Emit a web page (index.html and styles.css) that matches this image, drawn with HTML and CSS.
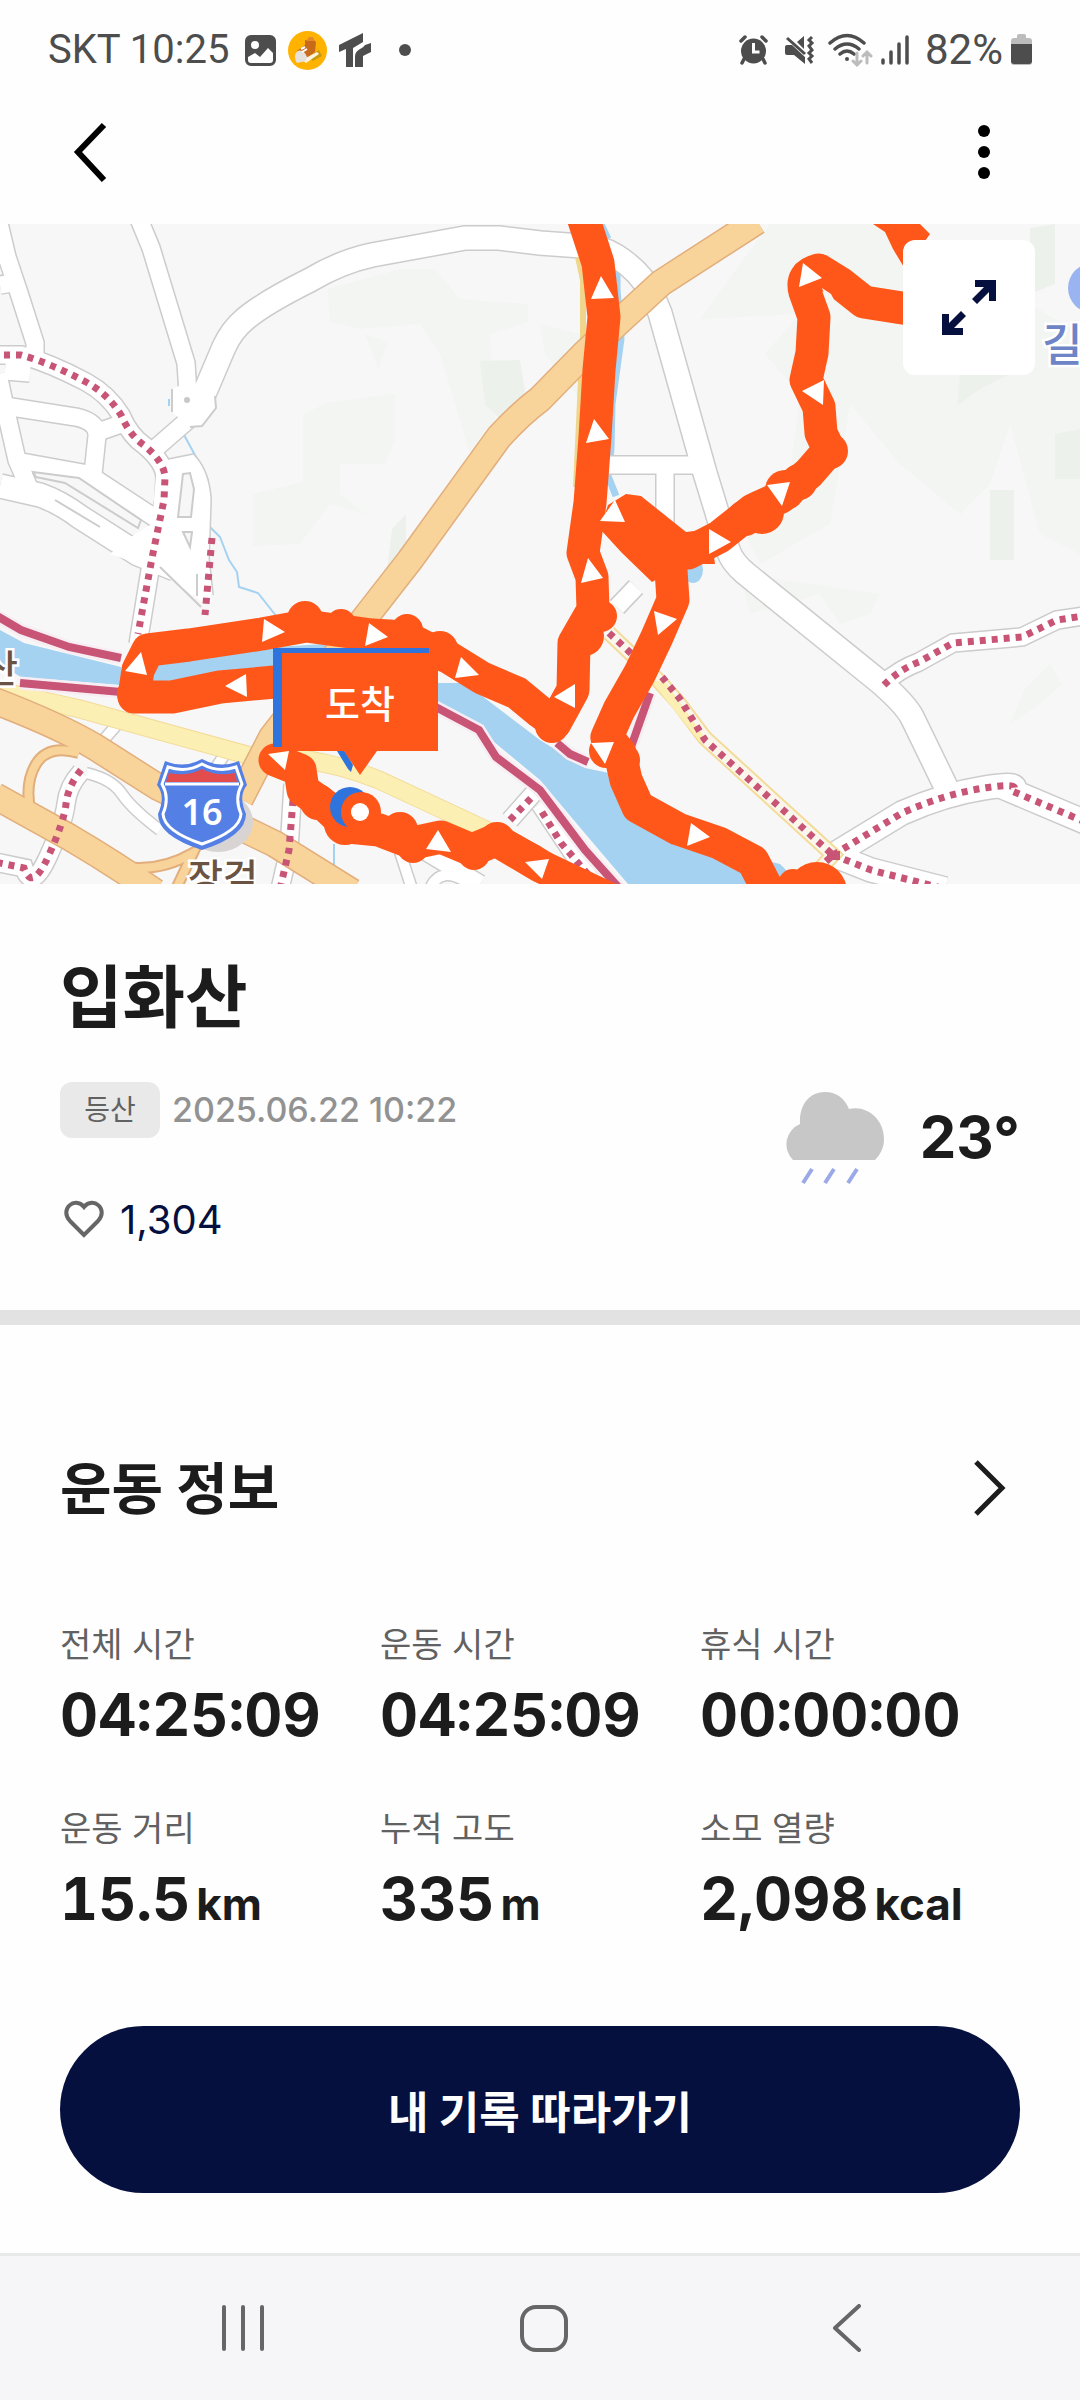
FILE: index.html
```html
<!DOCTYPE html>
<html lang="ko">
<head>
<meta charset="utf-8">
<meta name="viewport" content="width=device-width, initial-scale=1">
<title>입화산</title>
<link rel="stylesheet" href="styles.css">
</head>
<body>
<div class="screen">
  <div class="status">
    <div class="status-left">
      <span class="status-text">SKT 10:25</span>
      <svg width="31" height="31" viewBox="0 0 31 31"><path fill="#4d4d4d" fill-rule="evenodd" d="M6 0h19a6 6 0 0 1 6 6v19a6 6 0 0 1-6 6H6a6 6 0 0 1-6-6V6a6 6 0 0 1 6-6zM3 22v3a3 3 0 0 0 3 3h19a3 3 0 0 0 3-3v-7l-5-5-8 9-5-4zM10 6a4 4 0 1 0 0 8 4 4 0 0 0 0-8z"/></svg>
      <svg width="39" height="39" viewBox="0 0 39 39"><circle cx="19.500" cy="19.500" r="19.500" fill="#ffb300"/><path d="M20 26l11-7 3 6-9 5z" fill="#c79a10"/><path d="M17 9l8 0 3 2-1 10-12 9-6-10 8-6z" fill="#c96a1b"/><path d="M18 10l3-4 4 0 2 4z" fill="#e58a2a"/><path d="M14 29l15-8 2 2-13 9z" fill="#fff3e0"/><path d="M8 22c3-5 9-2 11 4l-1 4-9 2c-2-3-3-7-1-10z" fill="#e6e1dc"/><path d="M13 18l4-2M14 21l5-3" stroke="#fff" stroke-width="2"/></svg>
      <svg width="32" height="35" viewBox="0 0 32 35" fill="#4d4d4d"><path d="M0 12L24 0v9l-10 6v19H7V16l-7 3z"/><path d="M32 10v9l-8 4v11h-8V24c0-8 8-8 10-12z"/></svg>
      <svg class="more-dot" width="12" height="12" viewBox="0 0 12 12"><circle cx="6" cy="6" r="6" fill="#4d4d4d"/></svg>
    </div>
    <div class="status-right">
      <svg width="37" height="30" viewBox="0 0 37 30"><circle cx="14.500" cy="16" r="12.500" fill="#4d4d4d"/><path d="M2 6l4-4M27 6l-4-4M5 24l-2 4M24 24l2 4" stroke="#4d4d4d" stroke-width="3.500" stroke-linecap="round"/><path d="M14.500 8v9h6" fill="none" stroke="#fff" stroke-width="3"/></svg>
      <svg width="36" height="30" viewBox="0 0 36 30"><path fill="#4d4d4d" d="M3 10h5l13 12v7L10 20H3q-2 0-2-2v-6q0-2 2-2zM13 7l7-6v13z"/><path d="M3 3l18 16" stroke="#4d4d4d" stroke-width="3"/><path d="M28 2l-3 3 3 3-3 3 3 4-3 3 3 3-3 3 3 4" fill="none" stroke="#4d4d4d" stroke-width="3"/></svg>
      <svg width="45" height="34" viewBox="0 0 45 34" fill="none" stroke="#4d4d4d" stroke-width="3.500" stroke-linecap="round"><path d="M2 10Q19-5 36 10M7 16q12-10 24 0M12 21q7-6 14 0"/><circle cx="19" cy="26" r="2" fill="#4d4d4d" stroke="none"/><g stroke="#bcbcbc" stroke-width="3"><path d="M29 20v12m-4-4l4 4 4-4M39 30V19m-4 4l4-4 4 4"/></g></svg>
      <svg width="36" height="30" viewBox="0 0 36 30" stroke="#4d4d4d" stroke-width="3.500" stroke-linecap="round"><path d="M2 25v3M10 17v11M18 9v19M26 2v26"/></svg>
      <span class="status-text battery-level">82%</span>
      <svg width="21" height="32" viewBox="0 0 21 32"><path fill="#bcbcbc" d="M6 4V2q0-2 2-2h5q2 0 2 2v2h3q3 0 3 3v21q0 3-3 3H3q-3 0-3-3V7q0-3 3-3z"/><path fill="#4d4d4d" d="M0 10h21v17q0 3-3 3H3q-3 0-3-3z"/></svg>
    </div>
  </div>

  <header class="appbar">
    <button class="icon-button" aria-label="뒤로"><svg width="60" height="60" viewBox="0 0 60 60"><path d="M44 3L18 30l26 28" fill="none" stroke="#000" stroke-width="6"/></svg></button>
    <button class="icon-button" aria-label="더보기"><svg width="60" height="60" viewBox="0 0 60 60"><circle cx="30" cy="9" r="6"/><circle cx="30" cy="30" r="6"/><circle cx="30" cy="51" r="6"/></svg></button>
  </header>

  <div class="map">
    <svg class="map-drawing" viewBox="0 0 1080 660" role="img" aria-label="이동 경로 지도">
      <defs>
        <g id="roads-wide">
          <path d="M186 184L198 183 207 163 224 123Q232 106 244 96 262 80 310 56 340 38 372 31L465 14 499 14 540 19 581 22Q600 22 616 32 640 47 652 70L660 89 705 249 716 285 728 326Q732 338 745 349L881 459Q905 480 912 493L946 563"/>
          <path d="M833 631L902 589Q945 570 984 564T1012 567L1090 600M833 631L871 646 945 665"/>
          <path d="M0 262L40 271Q60 278 80 293L138 330 175 345"/>
        </g>
        <g id="roads-mid">
          <path d="M-2-5L7 33 19 69 35 119V135M0 61L18 58M139-5L151 24 186 139 188 170M188 196L157 223"/>
          <path d="M-5 131H21Q50 139 86 158 108 170 121 191 130 212 145 222 164 238 165 253L164 276 152 334 138 420M5 147L30 149"/>
          <path d="M-2 150L5 183 17 236 30 266M5 182L76 193Q98 198 97 212L93 250M98 208L121 200M22 238L88 250 155 294M165 245L190 240Q200 252 202 275L200 335 204 372"/>
          <path d="M609 241H698M665 246V300M617 383L636 363"/>
          <path d="M884 459Q900 445 919 438L953 419 1022 413 1057 396 1090 391"/>
          <path d="M293 560L289 626 280 665M81 548Q68 562 66 580T48 633 24 644L-5 638"/>
          <path d="M510 596L540 562M540 580L590 655M340 595L410 618 480 660"/>
        </g>
        <g id="roads-thin">
          <path d="M86 549Q112 555 122 570T160 606M100 520L122 495M215 545L225 530M400 628L412 665M430 665Q440 640 470 660"/>
        </g>
        <g id="highways">
          <path d="M757-3L661 59 585 129 540 175Q520 190 499 213L410 336 272 513 240 575"/>
          <path d="M-5 477Q60 502 95 523L158 563 275 620 352 668M-5 572L69 613Q115 640 155 668"/>
        </g>
        <g id="ramps"><path d="M79 529Q48 520 36 540T31 590M125 643Q160 648 193 629L176 665"/></g>
        <g id="yellow-road"><path d="M0 467L80 485 258 534M290 533Q340 540 379 556L495 610"/></g>
        <g id="farm-road"><path d="M609 409L630 429 657 455 678 478 705 514 833 631 815 650"/></g>
      </defs>

      <rect width="1080" height="660" fill="#f7f7f7"/>
      <g fill="#f2f5f1">
        <path d="M770 0H890L930 20 1080 110V330L1040 310 1010 200 990 260 960 290 900 240 850 180 830 300 760 340 740 300 790 250 800 170 765 130 800 90 700 95 740 40z"/>
        <path d="M328 65L400 45 435 45 460 75 528 80V98L490 110 495 200 470 230 455 180 440 130 420 100 360 105 330 98zM303 190L330 178 395 170V215L385 240 340 240 340 270 365 290 330 280 300 320 253 322V270L303 258zM365 110L388 118 378 145zM740 350L880 370 870 390 840 400 820 370 750 390zM1025 465L1050 440 1062 460 1040 480 1010 500z"/>
        <path d="M540 100L580 110V175L545 130z"/>
      </g>
      <g fill="#edf1ec"><path d="M480 137L520 136 527 180 500 195 485 180zM387 345L392 305 406 290V325zM1030 4L1055 0V60L1030 70zM960 150L1030 140 980 165 957 182zM990 266h24v70h-24zM1055 210L1080 205V255L1055 255z"/></g>

      <g class="water">
        <path d="M0 406L24 419 121 443V461L21 453 0 441zM150 441L275 423 340 419V440L275 443 186 459H150zM430 459H465L540 516 585 544 609 549 650 580 700 620 780 640 800 660H628L588 613 540 556 482 508 430 476z"/>
        <ellipse cx="693" cy="346" rx="10" ry="13"/>
      </g>
      <path class="stream" d="M183 209L196 233 208 256V301L220 313 229 336 237 348 239 363 258 369 277 393M334 620V650M169 175V182"/>
      <path class="canal" d="M600-2L608 15M617 45V65L621 115 612 180 611 225 608 252 616 272"/>

      <g class="road-case"><use href="#roads-wide" stroke-width="26"/><use href="#roads-mid" stroke-width="20"/><use href="#roads-thin" stroke-width="13"/></g>
      <path d="M157 240L200 240 206 258 205 330 212 377 204 380 162 348 110 330 135 310 152 300z" fill="#fff"/>
      <g class="road-fill"><use href="#roads-wide" stroke-width="23"/><use href="#roads-mid" stroke-width="17"/><use href="#roads-thin" stroke-width="10"/></g>
      <path d="M172 165L188 158 215 172 216 184 202 202 190 203 172 188z" fill="#fff"/>
      <path d="M190 203L202 202 216 184 215 172M172 165V188" fill="none" stroke="#ccc" stroke-width="2"/>
      <circle cx="187" cy="176" r="3" fill="#c8c8c8"/>
      <g class="island">
        <path d="M33 248L79 254 141 296 138 304 65 259 36 253zM183 250L190 249 194 265 191 293H178zM183 308H192L190 323z"/>
        <path d="M55 276L100 303M160 343L201 383M197 350V372"/>
      </g>

      <path d="M578 33L583 56V113L576 263" fill="none" stroke="#f0d68c" stroke-width="6"/>
      <g class="yellow-case"><use href="#yellow-road" stroke-width="19"/><use href="#farm-road" stroke-width="16"/></g>
      <g class="yellow-fill"><use href="#yellow-road" stroke-width="17"/></g>
      <g class="farm-fill"><use href="#farm-road" stroke-width="12"/></g>
      <path d="M652 458L664 456 705 514 700 518z" fill="#fcefb4"/>

      <g class="highway-case"><use href="#highways" stroke-width="28"/><use href="#ramps" stroke-width="12"/></g>
      <g class="highway-fill"><use href="#highways" stroke-width="25"/><use href="#ramps" stroke-width="8"/></g>

      <path class="bike-case" d="M-3 392L21 406 69 423 121 434M20 459L121 468M430 480L479 506 496 533 540 566 585 626 620 665M557 519L570 530 588 538M650 469L631 523"/>
      <path class="bike" d="M-3 392L21 406 69 423 121 434M20 459L121 468M430 480L479 506 496 533 540 566 585 626 620 665M557 519L570 530 588 538M650 469L631 523"/>
      <g class="dots">
        <path d="M4 131H21Q50 139 86 158 108 170 121 191 130 212 145 222 164 238 165 253L164 276 152 334 138 410"/>
        <path d="M212 314L205 391M293 576L289 626 280 665M81 546Q68 562 66 580T48 633 24 644L-5 638"/>
        <path d="M884 461Q900 445 919 438L953 419 1022 413 1057 396 1090 391M833 631L902 589Q945 570 984 564T1012 567L1090 600M833 631L871 646 945 665"/>
        <path d="M609 409L635 433M662 453L680 475 705 516 833 631 820 643M542 588L561 619 592 655M510 596L535 570"/>
      </g>
      <path d="M827 627h13v9h-13z" fill="#c85476"/>

      <g class="track">
        <path d="M582-10L598 39 604 93 599 146 595 213 590 279 583 329 592 353 593 386 574 419 573 466 555 499 540 488 517 469 482 454 448 433 425 423 406 413 372 411 306 402 262 410 189 421 148 426 138 446 134 473 172 473 220 463 275 458"/>
        <path d="M275 536L300 546 303 566 327 583 348 603 379 606 413 619 441 613 472 626 496 616 540 642 620 680"/>
        <path d="M915 86L864 78 840 59 819 46Q800 50 805 68L814 93 812 129 806 156 819 183 821 209 829 226 809 249 781 273 753 286 719 313 688 329 625 298"/>
        <path d="M620 300L650 325 671 346 673 376 657 413 640 449 619 486 607 513 620 529 626 556 638 583 678 605 719 619 753 637 770 670"/>
      </g>
      <g class="track-fill">
        <path d="M608 281L626 270 641 272 686 308 710 305 715 340 685 340 652 358 622 329 600 305z"/>
        <path d="M873 0H920L930 10 925 17 940 60 905 45 893 25 885 8z"/>
        <circle cx="305" cy="395" r="18"/><circle cx="341" cy="400" r="15"/><circle cx="407" cy="406" r="16"/><circle cx="440" cy="425" r="18"/>
        <circle cx="830" cy="227" r="18"/><circle cx="799" cy="258" r="18"/><circle cx="785" cy="266" r="20"/><circle cx="762" cy="288" r="22"/><circle cx="745" cy="294" r="18"/>
        <circle cx="601" cy="392" r="16"/><circle cx="584" cy="412" r="20"/><circle cx="552" cy="502" r="17"/><circle cx="606" cy="527" r="17"/><circle cx="623" cy="536" r="17"/>
        <circle cx="817" cy="668" r="30"/><circle cx="793" cy="660" r="15"/>
        <circle cx="318" cy="578" r="18"/><circle cx="345" cy="600" r="21"/><circle cx="413" cy="623" r="16"/><circle cx="400" cy="606" r="18"/><circle cx="474" cy="630" r="16"/><circle cx="497" cy="616" r="18"/><circle cx="134" cy="470" r="17"/>
        <path d="M496 598L540 622 600 660H540L500 634z"/>
      </g>
      <path d="M822 64L831 70 840 87 850 92 832 104 831 88z" fill="#f4f6f3"/>
      <path class="arrow" d="M601 52L591 75 614 74zM594 195L586 219 609 215zM615 276L600 297 625 298zM803 39L799 63 822 54zM802 167L824 156 823 181zM767 261L790 258 782 282zM709 305V330L731 318zM588 334L581 359 603 354zM654 387L677 395 658 411zM554 473L575 460V484zM591 519L614 518 605 540zM691 599L710 613 687 622zM264 395L285 408 262 418zM369 399L388 413 365 422zM461 433L479 451 455 454zM141 428L125 447 147 451zM225 462L246 450 247 473zM268 530L289 527 285 546zM438 606L426 625 451 628zM525 638L549 635 542 655z"/>

      <circle cx="350" cy="583" r="20" fill="#2f74dc"/>
      <circle cx="361" cy="588" r="20" fill="#ff5719"/>
      <circle cx="360" cy="588" r="9" fill="#fff"/>
      <path d="M273 424H429V429H282V523H273zM337 527H345L353 541 351 548 348 545z" fill="#2f74dc"/>
      <path d="M282 429H438V527H377L360 551 344 527H282z" fill="#ff5719"/>
      <text class="flag-label" x="360" y="494" text-anchor="middle">도착</text>

      <ellipse cx="218" cy="598" rx="35" ry="30" fill="#d9d4d4"/>
      <path d="M165 537Q184 545 202 535 220 545 239 537L247 561Q238 572 246 590 246 612 202 626 158 612 158 590 166 572 157 561z" fill="#5480e6"/>
      <path d="M168 543Q186 549 202 540 218 549 236 543L242 560Q234 574 241 590 240 607 202 620 164 607 163 590 170 574 162 560z" fill="#5480e6" stroke="#fff" stroke-width="3"/>
      <path d="M169 549Q188 553 202 545 216 553 235 549L237 558H166z" fill="#e34c4c"/>
      <path d="M165 560H239" stroke="#fff" stroke-width="3"/>
      <text class="shield-label" x="202" y="601" text-anchor="middle">16</text>

      <circle cx="1093" cy="64" r="25" fill="#9ab4f2"/>
      <text class="place" x="-17" y="458">산</text>
      <text class="place" x="188" y="667">장검</text>
      <text class="poi" x="1042" y="137">길</text>
    </svg>
    <button class="expand" aria-label="지도 확대"><svg width="56" height="56" viewBox="0 0 56 56" fill="#05103f"><path d="M34 0H55V21H48V12L36 24 31 19 43 7H34zM22 55H1V34H8V43L20 31 25 36 13 48H22z"/></svg></button>
  </div>

  <main>
    <section class="summary">
      <h1>입화산</h1>
      <div class="summary-row">
        <div class="summary-meta">
          <div class="meta-line"><span class="chip">등산</span><time class="date" datetime="2025-06-22T10:22">2025.06.22 10:22</time></div>
          <button class="likes"><svg width="48" height="46" viewBox="0 0 48 46"><path d="M24 38L10 24C-1 12 15-1 24 10 33-1 49 12 38 24z" fill="none" stroke="#666" stroke-width="4"/></svg><span>1,304</span></button>
        </div>
        <div class="weather">
          <svg width="100" height="96" viewBox="0 0 100 96"><path fill="#c7c7c7" d="M9 71A22 22 0 0 1 16 35C15 15 26 3 41 3 53 3 61 10 65 20 84 16 100 31 100 50 100 59 96 66 91 71z"/><path d="M28 80l-9 14M50 80l-9 14M73 80l-9 14" stroke="#9ca9e8" stroke-width="4"/></svg>
          <span>23°</span>
        </div>
      </div>
    </section>

    <section class="workout">
      <div class="workout-head">
        <h2>운동 정보</h2>
        <button class="icon-button" aria-label="운동 정보 더보기"><svg width="60" height="60" viewBox="0 0 60 60"><path d="M16 3l26 26-26 26" fill="none" stroke="#1c1c1c" stroke-width="5"/></svg></button>
      </div>
      <dl class="stats">
        <div><dt>전체 시간</dt><dd>04:25:09</dd></div>
        <div><dt>운동 시간</dt><dd>04:25:09</dd></div>
        <div><dt>휴식 시간</dt><dd>00:00:00</dd></div>
        <div><dt>운동 거리</dt><dd>15.5<span class="unit">km</span></dd></div>
        <div><dt>누적 고도</dt><dd>335<span class="unit">m</span></dd></div>
        <div><dt>소모 열량</dt><dd>2,098<span class="unit">kcal</span></dd></div>
      </dl>
      <button class="follow">내 기록 따라가기</button>
    </section>
  </main>

  <nav class="system-nav">
    <button aria-label="최근 앱"><svg width="48" height="48" viewBox="0 0 48 48" stroke="#666" stroke-width="4" stroke-linecap="round"><path d="M5 3v42M24 3v42M43 3v42"/></svg></button>
    <button aria-label="홈"><svg width="48" height="48" viewBox="0 0 48 48"><rect x="2" y="3" width="44" height="43" rx="14" fill="none" stroke="#666" stroke-width="4"/></svg></button>
    <button aria-label="뒤로"><svg width="48" height="48" viewBox="0 0 48 48"><path d="M38 2L14 24l24 22" fill="none" stroke="#666" stroke-width="4" stroke-linecap="round" stroke-linejoin="round"/></svg></button>
  </nav>
</div>
</body>
</html>
```
FILE: styles.css
```css
* { box-sizing: border-box; }

body {
  margin: 0;
  background: #fefefe;
  color: #1c1c1c;
  font-family: Inter, "Noto Sans CJK KR", sans-serif;
}

h1, h2, dl, dd { margin: 0; }
svg { display: block; flex: none; }

button {
  border: 0;
  padding: 0;
  background: none;
  color: inherit;
  font: inherit;
  cursor: pointer;
}

.screen {
  display: flex;
  flex-direction: column;
  min-height: 100vh;
}

/* Status bar */
.status {
  display: flex;
  justify-content: space-between;
  height: 100px;
  padding: 0 48px;
}
.status-left, .status-right { display: flex; align-items: center; }
.status-left { gap: 12px; }
.status-left .status-text { margin-right: 4px; }
.status-right { gap: 8px; }
.more-dot { margin-left: 16px; }
.status-text {
  color: #4d4d4d;
  font-family: Roboto, sans-serif;
  font-size: 40px;
  line-height: 48px;
}
.battery-level { font-size: 42px; }

/* App bar */
.appbar {
  display: flex;
  align-items: center;
  justify-content: space-between;
  height: 124px;
  padding: 0 66px 20px 60px;
}
.icon-button { width: 60px; height: 60px; }

/* Map */
.map { position: relative; }
.map-drawing { width: 100%; height: auto; }
.expand {
  position: absolute;
  top: 16px;
  right: 45px;
  display: flex;
  align-items: center;
  justify-content: center;
  width: 132px;
  height: 135px;
  border-radius: 12px;
  background: #fff;
}
.water { fill: #a6d2f2; }
.stream { fill: none; stroke: #a6d2f2; stroke-width: 2; }
.canal { fill: none; stroke: #a6d2f2; stroke-width: 7; }
.road-case, .road-fill, .yellow-case, .yellow-fill, .farm-fill, .highway-case, .highway-fill { fill: none; }
.road-case { stroke: #cccccc; }
.road-fill { stroke: #ffffff; }
.island { fill: #f7f7f7; stroke: #cccccc; stroke-width: 2; }
.yellow-case { stroke: #f3dc9a; }
.yellow-fill { stroke: #fcefb4; }
.farm-fill { stroke: #faf6ec; }
.highway-case { stroke: #e2ae7c; }
.highway-fill { stroke: #f8d39a; }
.bike-case { fill: none; stroke: #f7edf2; stroke-width: 13; }
.bike { fill: none; stroke: #c85476; stroke-width: 8; }
.dots { fill: none; stroke: #c85476; stroke-width: 7; stroke-dasharray: 6 6; }
.track { fill: none; stroke: #ff5719; stroke-width: 33; stroke-linecap: round; stroke-linejoin: round; }
.track-fill { fill: #ff5719; }
.arrow { fill: #fff; }
.flag-label { fill: #fff; font: 500 38px "Noto Sans CJK KR", sans-serif; }
.shield-label { fill: #fff; font: 600 36px "Noto Sans", sans-serif; }
.place, .poi { paint-order: stroke; stroke: #fff; stroke-width: 5; }
.place { fill: #6b5344; font: 500 38px "Noto Sans CJK KR", sans-serif; }
.poi { fill: #6d85c6; font: 500 44px "Noto Sans CJK KR", sans-serif; }

/* Summary */
.summary {
  padding: 64px 60px 62px;
  border-bottom: 15px solid #e2e2e2;
}
h1 {
  font-size: 68px;
  font-weight: 700;
  line-height: 98px;
}
.summary-row {
  display: flex;
  justify-content: space-between;
  margin-top: 36px;
}
.meta-line { display: flex; align-items: center; gap: 12px; }
.chip {
  width: 100px;
  border-radius: 12px;
  background: #e9e9e9;
  color: #616161;
  font-size: 28px;
  line-height: 56px;
  text-align: center;
}
.date {
  color: #929292;
  font-size: 34px;
  font-weight: 500;
  line-height: 56px;
}
.likes {
  display: flex;
  align-items: center;
  gap: 12px;
  margin-top: 54px;
  color: #05103f;
  font-size: 40px;
  line-height: 56px;
}
.weather {
  display: flex;
  align-items: center;
  gap: 36px;
  height: 110px;
  font-size: 58px;
  font-weight: 700;
}

/* Workout */
.workout { padding: 132px 60px 60px; }
.workout-head {
  display: flex;
  align-items: center;
  justify-content: space-between;
}
h2 {
  font-size: 56px;
  font-weight: 700;
  line-height: 64px;
}
.stats {
  display: grid;
  grid-template-columns: repeat(3, 1fr);
  row-gap: 48px;
  margin-top: 96px;
}
dt {
  color: #616161;
  font-size: 34px;
  line-height: 56px;
}
dd {
  margin-top: 4px;
  font-size: 59px;
  font-variant-numeric: tabular-nums;
  font-weight: 700;
  line-height: 76px;
  white-space: nowrap;
}
.unit { margin-left: 6px; font-size: 44px; }
.follow {
  display: block;
  width: 100%;
  height: 167px;
  margin-top: 84px;
  border-radius: 84px;
  background: #05103f;
  color: #fff;
  font-size: 44px;
  font-weight: 700;
}

/* System navigation */
.system-nav {
  display: grid;
  grid-template-columns: repeat(3, 1fr);
  flex: 1;
  min-height: 147px;
  padding: 0 84px 0 92px;
  border-top: 3px solid #e8eae9;
  background: #f6f6f8;
}
.system-nav button {
  display: flex;
  align-items: center;
  justify-content: center;
}
```
